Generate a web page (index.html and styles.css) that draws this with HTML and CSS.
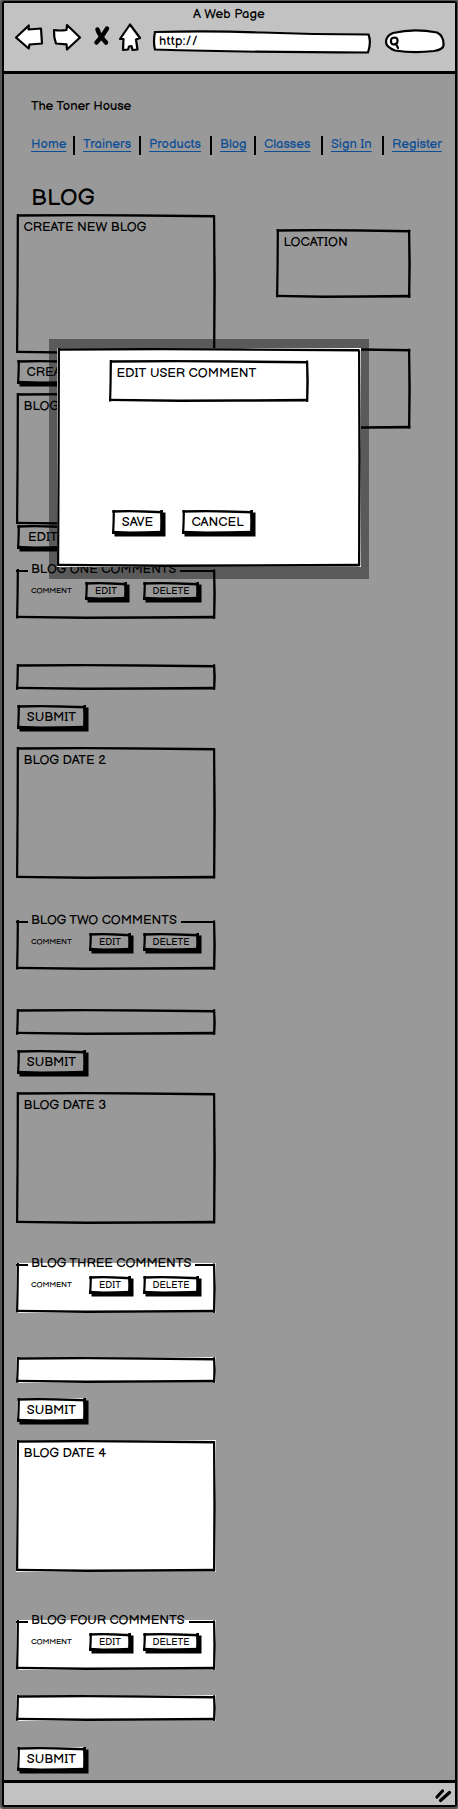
FILE: index.html
```html
<!DOCTYPE html>
<html lang="en">
<head>
<meta charset="utf-8">
<title>The Toner House - Blog</title>
<link rel="stylesheet" href="styles.css">
</head>
<body>
<div class="window">
  <header class="chrome">
    <div class="page-title">A Web Page</div>
    <div class="toolbar">
      <svg class="icon back" viewBox="0 0 30 28" width="30" height="28"><path d="M2 14.5 14.8 2.5 14.5 6.5 27 5.5 28 20.5 15.5 21.5 14.7 25.5Z"/></svg>
      <svg class="icon forward" viewBox="0 0 30 28" width="30" height="28"><path d="M2 7Q8 8 14.5 7L15 2 28 14.5 15 26.5 14.5 21.3 4 20.5 2.3 14Z"/></svg>
      <svg class="icon stop" viewBox="0 0 18 22" width="18" height="22"><path d="M4.5 4.5Q6 10 13 17.500M14 3.500Q10 11 3.500 17.500"/></svg>
      <svg class="icon home" viewBox="0 0 24 30" width="24" height="30"><path d="M12 2.500 22 16 18 17.500 19.500 27.500 14.500 28 13.500 24 11 24.500 10 27.500 5 28 5.500 17 2 17Z"/></svg>
      <div class="url">
        <svg viewBox="0 0 220 24" width="220" height="24"><path d="M3 2Q60 .7 110 2.500T216.500 4.500Q219.500 12 216 22.500 100 22.500 3 19.500 1 12 3 2Z"/></svg>
        <span>http://</span>
      </div>
      <svg class="icon search" viewBox="0 0 62 26" width="62" height="26"><path d="M9 5Q30 0 53 4.500 60 8 59.500 17.500 59 21.500 50 23 30 25.500 11 22.500 2 19 2 14 2 8 9 5Z"/><path d="M7 12.500Q7 9.500 11 9.500 14 10 13.500 13.500 13 16.500 9.500 16.500 6.500 16 7 12.500M12 16 14 20"/></svg>
    </div>
  </header>

  <main class="content">
    <div class="site-name">The Toner House</div>
    <nav class="nav">
      <a class="n-home">Home</a><a class="n-trainers">Trainers</a><a class="n-products">Products</a><a class="n-blog">Blog</a><a class="n-classes">Classes</a><a class="n-sign">Sign In</a><a class="n-register">Register</a>
    </nav>
    <h1>BLOG</h1>

    <div class="columns">
      <div class="feed">
        <div class="box create"><span>CREATE NEW BLOG</span></div>
        <button class="btn after-create">CREATE</button>
        <div class="box post first"><span>BLOG DATE 1</span></div>
        <button class="btn edit-post">EDIT</button>

        <section class="comments one">
          <div class="legend"><i></i><span>BLOG ONE COMMENTS</span><i></i></div>
          <div class="comment"><span>COMMENT</span><button class="btn small edit">EDIT</button><button class="btn small delete">DELETE</button></div>
        </section>
        <div class="box input"></div>
        <button class="btn">SUBMIT</button>

        <div class="box post"><span>BLOG DATE 2</span></div>
        <section class="comments two">
          <div class="legend"><i></i><span>BLOG TWO COMMENTS</span><i></i></div>
          <div class="comment"><span>COMMENT</span><button class="btn small edit">EDIT</button><button class="btn small delete">DELETE</button></div>
        </section>
        <div class="box input"></div>
        <button class="btn">SUBMIT</button>

        <div class="box post"><span>BLOG DATE 3</span></div>
        <section class="comments three lit">
          <div class="legend"><i></i><span>BLOG THREE COMMENTS</span><i></i></div>
          <div class="comment"><span>COMMENT</span><button class="btn small edit">EDIT</button><button class="btn small delete">DELETE</button></div>
        </section>
        <div class="box input lit"></div>
        <button class="btn lit">SUBMIT</button>

        <div class="box post lit"><span>BLOG DATE 4</span></div>
        <section class="comments four lit">
          <div class="legend"><i></i><span>BLOG FOUR COMMENTS</span><i></i></div>
          <div class="comment"><span>COMMENT</span><button class="btn small edit">EDIT</button><button class="btn small delete">DELETE</button></div>
        </section>
        <div class="box input lit"></div>
        <button class="btn lit last">SUBMIT</button>
      </div>

      <aside class="side">
        <div class="box location"><span>LOCATION</span></div>
        <div class="box extra"></div>
      </aside>
    </div>
  </main>

  <footer class="status">
    <svg viewBox="0 0 20 16" width="20" height="16"><path d="M3 9 8.500 3M6.500 12.500 15.500 4.500"/></svg>
  </footer>

  <div class="shade">
    <div class="dialog box">
      <div class="box field"><span>EDIT USER COMMENT</span></div>
      <div class="actions"><button class="btn lit save">SAVE</button><button class="btn lit cancel">CANCEL</button></div>
    </div>
  </div>
</div>
</body>
</html>
```

FILE: styles.css
```css
/* Hand-drawn edges: thin strips stretched along each side of a box */
:root {
  --top: url("data:image/svg+xml,%3Csvg xmlns='http://www.w3.org/2000/svg' viewBox='0 0 200 4' preserveAspectRatio='none'%3E%3Cpath d='M1 .2 60 0 120 .3 199 1V3.400L130 2.800 70 2.200 1 2.700Z'/%3E%3C/svg%3E");
  --bottom: url("data:image/svg+xml,%3Csvg xmlns='http://www.w3.org/2000/svg' viewBox='0 0 200 4' preserveAspectRatio='none'%3E%3Cpath d='M0 .7 70 1.500 130 1.300 199 .7V3.400L130 3.700 70 3.900 0 2.900Z'/%3E%3C/svg%3E");
  --left: url("data:image/svg+xml,%3Csvg xmlns='http://www.w3.org/2000/svg' viewBox='0 0 4 200' preserveAspectRatio='none'%3E%3Cpath d='M.7 0 .5 100 0 198H2.200L2.700 100 3 0Z'/%3E%3C/svg%3E");
  --right: url("data:image/svg+xml,%3Csvg xmlns='http://www.w3.org/2000/svg' viewBox='0 0 4 200' preserveAspectRatio='none'%3E%3Cpath d='M1 2 1.300 100 1 199H3.300L3.800 100 3.200 2Z'/%3E%3C/svg%3E");
}

* { box-sizing: border-box; }

body {
  margin: 0;
  background: #555;
  color: #000;
  font-family: "Balsamiq Sans", Lato, sans-serif;
  font-size: 13px;
  line-height: 16px;
}

.window {
  position: relative;
  display: flex;
  flex-direction: column;
  width: 458px;
  height: 1809px;
  padding: 1px;
  overflow: hidden;
  background: #999;
}

.window::before {
  content: "";
  position: absolute;
  inset: 1px 1px 2px 2px;
  border: 2px solid #000;
  border-radius: 2px;
  box-shadow: 0 0 0 2px #555;
  pointer-events: none;
}

.chrome {
  height: 73px;
  margin: 0 2px 0 1px;
  padding-top: 5px;
  border-bottom: 3px solid #000;
  background: #c2c2c2;
}

.page-title {
  height: 15px;
  padding-left: 1px;
  text-align: center;
  letter-spacing: .1px;
}

.toolbar {
  display: flex;
  align-items: flex-start;
  padding-left: 12px;
}

.icon { flex: none; fill: #fff; stroke: #000; stroke-width: 2.2; stroke-linejoin: round; stroke-linecap: round; }
.back { margin: 2px 0 0 0; }
.forward { margin: 2px 0 0 8px; }
.stop { margin: 4px 0 0 11px; fill: none; stroke-width: 4.5; }
.home { margin: 1px 0 0 7px; }

.url { display: grid; flex: none; width: 220px; height: 24px; margin: 9px 0 0 10px; }
.url > * { grid-area: 1 / 1; }
.url svg { fill: #fff; stroke: #000; stroke-width: 2.2; }
.url span { padding: 3px 0 0 7px; letter-spacing: .25px; }
.search { margin: 7px 0 0 12px; }

.content { flex: 1; padding: 24px 0 0 15px; }

.site-name { padding-left: 15px; letter-spacing: -.03px; }

.nav { display: flex; height: 19px; margin-top: 22px; padding-left: 15px; }
.nav a {
  display: flex;
  line-height: 17px;
  color: #0f4f96;
  white-space: nowrap;
  text-decoration: underline;
  text-underline-offset: 3px;
  text-decoration-thickness: 1px;
}
.nav a + a::before { content: ""; width: 2px; height: 19px; margin-right: 8px; background: #000; }
.n-home { width: 42px; }
.n-trainers { width: 66px; }
.n-products { width: 71px; }
.n-blog { width: 44px; }
.n-classes { width: 67px; }
.n-sign { width: 61px; }

h1 { height: 28px; margin: 29px 0 0 15px; font-size: 23px; font-weight: 400; line-height: 29px; letter-spacing: .3px; }

.columns { display: flex; gap: 60px; margin-top: 2px; }
.feed { width: 200px; }
.side { width: 135px; padding-top: 15px; }

.box {
  width: 100%;
  padding: 5px 0 0 7.500px;
  background-image: var(--top), var(--bottom), var(--left), var(--right);
  background-position: 0 0, 0 100%, 0 0, 100% 0;
  background-size: 100% 4px, 100% 4px, 4px 100%, 4px 100%;
  background-repeat: no-repeat;
}
.box > span { line-height: 17px; }

.lit { background-color: #fff; }
.create { height: 140px; }
.post { height: 132px; margin-top: 18px; }
.first { margin-top: 6px; }
.input { height: 26px; margin-bottom: 15px; }
.location { height: 69px; }
.extra { height: 81px; margin-top: 50px; }

.btn {
  display: block;
  width: 69px;
  height: 24px;
  margin: 0 0 0 1px;
  padding: 0;
  border: 0;
  box-shadow: 2.500px 2.500px 0 #000, inset -2px -2px 0 #000;
  background-color: transparent;
  background-image: var(--top), var(--bottom), var(--left), var(--right);
  background-position: 0 0, 0 100%, 0 0, 100% 0;
  background-size: 100% 4px, 100% 4px, 4px 100%, 4px 100%;
  background-repeat: no-repeat;
  color: #000;
  font: inherit;
  line-height: 24px;
  text-align: center;
}
.btn.lit { background-color: #fff; }
.after-create { margin-top: 6px; margin-bottom: 9px; }
.edit-post { width: 52px; }
.last { margin-top: 26px; }

.comments {
  height: 50px;
  background-image: var(--bottom), var(--left), var(--right);
  background-position: 0 100%, 0 0, 100% 0;
  background-size: 100% 4px, 4px 100%, 4px 100%;
  background-repeat: no-repeat;
}
.one { margin: 20px 0 45px; }
.two { margin: 41px 0 39px; }
.three { margin: 39px 0 44px; }
.four { margin: 48px 0 25px; }

.legend { display: flex; height: 13px; }
.legend i { flex: none; width: 12px; height: 2px; margin-top: 1px; background: #000; }
.legend i:last-child { flex: 1; margin-right: 1px; }
.legend span { margin-top: -8px; padding: 0 4px 0 3px; white-space: nowrap; letter-spacing: -.06px; }

.comment { display: flex; padding-left: 15px; font-size: 8px; }
.comment > span { width: 58px; line-height: 18px; white-space: nowrap; letter-spacing: -.15px; }
.small { flex: none; width: 42px; height: 18px; font-size: 9.500px; line-height: 17px; margin: 0; }
.delete { width: 56px; margin-left: 12px; }
.one .comment > span { width: 54px; }
.one .delete { margin-left: 16px; }

.status {
  height: 27px;
  margin: 0 2px 1px;
  border-top: 3px solid #000;
  background: #c2c2c2;
  text-align: right;
}
.status svg { margin: 5px 1px 0 0; fill: none; stroke: #000; stroke-width: 3.2; stroke-linecap: round; }

/* Modal */
.shade {
  position: absolute;
  top: 339px;
  left: 49px;
  width: 320px;
  height: 240px;
  padding: 9px 8px 12px 8px;
  background: rgba(0, 0, 0, .41);
}
.dialog { height: 219px; padding: 12px 0 0 52px; background-color: #fff; }
.field { width: 200px; height: 42px; }
.actions { display: flex; gap: 19px; padding: 108px 0 0 3px; }
.actions .btn { margin: 0; }
.save { width: 51px; }
.cancel { width: 71px; }
```
